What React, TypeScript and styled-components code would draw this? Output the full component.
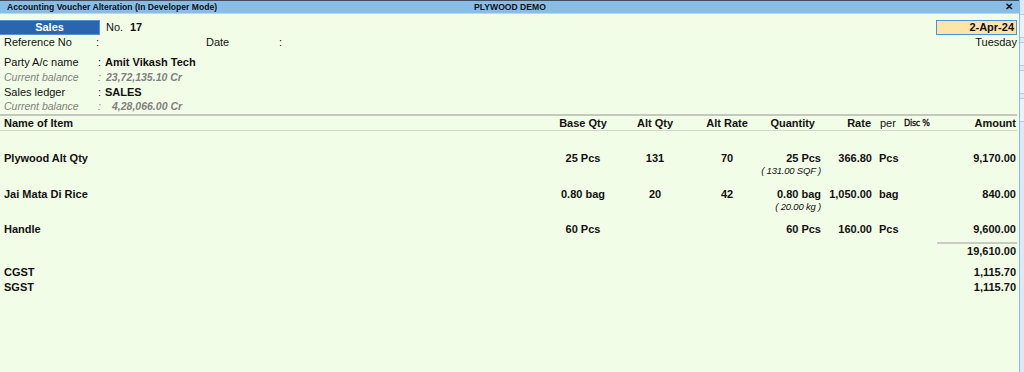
import styled, { createGlobalStyle } from "styled-components"

const GlobalStyle = createGlobalStyle`
  html, body {
    margin: 0;
    padding: 0;
    background: #f1fde6;
  }
  body {
    font-family: "Liberation Sans", Arial, sans-serif;
    font-size: 11px;
    color: #111;
  }
`

const Screen = styled.div`
  width: 1024px;
  height: 372px;
  display: flex;
  overflow: hidden;
`

const Window = styled.div`
  flex: 1;
  display: flex;
  flex-direction: column;
  background: #f1fde6;
`

const SideStrip = styled.div`
  width: 4px;
  border-left: 1px solid #8fb6dc;
  background: #dbeaf8;
  display: flex;
  flex-direction: column;
  gap: 4px;
  padding-top: 14px;
`

const StripKey = styled.div`
  height: 22px;
  border-top: 1px solid #b7cde3;
  border-bottom: 1px solid #b7cde3;
  background: #e9f2fb;
`

const TitleBar = styled.div`
  height: 12px;
  border-top: 1px solid #3d4f60;
  border-bottom: 1px solid #b9d7ee;
  background: #88bde6;
  display: grid;
  grid-template-columns: 1fr auto 1fr;
  align-items: center;
  padding: 0 6px 0 7px;
  font-size: 8.6px;
  font-weight: bold;
  color: #111;
`

const Close = styled.span`
  justify-self: end;
  font-size: 10px;
  line-height: 10px;
`

const Header = styled.div`
  padding: 5px 2px 0 0;
  display: flex;
  flex-direction: column;
`

const Line = styled.div<{ $h?: number }>`
  display: flex;
  align-items: center;
  height: ${p => p.$h ?? 15}px;
`

const VoucherType = styled.div`
  width: 99px;
  height: 13px;
  background: #2a65b0;
  border: 1px solid #5b8fcf;
  border-left: none;
  color: #fff;
  font-weight: bold;
  font-size: 11px;
  text-align: center;
  line-height: 13px;
`

const Label = styled.span<{ $w: number; $pl?: number }>`
  display: inline-block;
  width: ${p => p.$w}px;
  padding-left: ${p => p.$pl ?? 0}px;
  box-sizing: border-box;
`

const Bold = styled.span`
  font-weight: bold;
`

const Spacer = styled.div`
  flex: 1;
`

const DateBox = styled.div`
  width: 77px;
  height: 13px;
  background: #fde4a8;
  border: 1px solid #4f92d3;
  text-align: right;
  padding-right: 2px;
  font-weight: bold;
  line-height: 13px;
`

const Muted = styled.span<{ $w?: number; $pl?: number }>`
  display: inline-block;
  color: #808080;
  font-style: italic;
  font-size: 10.5px;
  ${p => (p.$w ? `width: ${p.$w}px;` : "")}
  padding-left: ${p => p.$pl ?? 0}px;
  box-sizing: border-box;
`

const MutedValue = styled(Muted)`
  font-weight: bold;
`

const Rule = styled.div<{ $strong?: boolean }>`
  height: ${p => (p.$strong ? 2 : 1)}px;
  background: ${p => (p.$strong ? "#c4c8c0" : "#d3d7cf")};
  margin-right: 2px;
`

const ItemGrid = styled.div`
  display: grid;
  grid-template-columns: 540px 86px 58px 86px 52px 50px 30px 1fr;
  padding-right: 3px;
  align-items: center;
`

const Cell = styled.div<{ $align?: "left" | "center" | "right"; $pl?: number; $pr?: number; $bold?: boolean }>`
  text-align: ${p => p.$align ?? "left"};
  padding-left: ${p => p.$pl ?? 0}px;
  padding-right: ${p => p.$pr ?? 0}px;
  font-weight: ${p => (p.$bold === false ? "normal" : "bold")};
  white-space: nowrap;
  line-height: 14px;
`

const HeadRow = styled(ItemGrid)`
  height: 14px;
`

const DiscAmount = styled.div`
  display: flex;
  justify-content: space-between;
  align-items: center;
`

const Body = styled.div`
  padding-top: 20px;
  display: flex;
  flex-direction: column;
`

const ItemBlock = styled.div<{ $hasSub: boolean }>`
  height: ${p => (p.$hasSub ? 35.5 : 20)}px;
`

const SubLine = styled.div`
  grid-column: 2 / 6;
  padding-right: 1px;
  font-style: italic;
  font-size: 9.5px;
  letter-spacing: -0.2px;
  line-height: 12px;
  text-align: right;
  white-space: nowrap;
`

const DiscHead = styled(Cell)`
  font-size: 9px;
  font-weight: normal;
  font-family: "DejaVu Sans Condensed", "Liberation Sans", sans-serif;
  letter-spacing: -0.3px;
  -webkit-text-stroke: 0.3px #111;
`

const TotalRule = styled.div`
  height: 2px;
  background: #c8ccc4;
  width: 80px;
  margin-left: auto;
  margin-right: 2px;
`

const SummaryRow = styled.div<{ $h: number }>`
  display: flex;
  justify-content: space-between;
  align-items: center;
  height: ${p => p.$h}px;
  padding: 0 3px 0 4px;
  font-weight: bold;
`

interface Item {
  name: string
  base: string
  alt: string
  altRate: string
  qty: string
  rate: string
  per: string
  amount: string
  sub?: string
}

const items: Item[] = [
  { name: "Plywood Alt Qty", base: "25 Pcs", alt: "131", altRate: "70", qty: "25 Pcs", rate: "366.80", per: "Pcs", amount: "9,170.00", sub: "( 131.00 SQF )" },
  { name: "Jai Mata Di Rice", base: "0.80 bag", alt: "20", altRate: "42", qty: "0.80 bag", rate: "1,050.00", per: "bag", amount: "840.00", sub: "( 20.00 kg )" },
  { name: "Handle", base: "60 Pcs", alt: "", altRate: "", qty: "60 Pcs", rate: "160.00", per: "Pcs", amount: "9,600.00" },
]

const App: React.FC = () => {
  return (
    <Screen>
      <GlobalStyle />
      <Window>
        <TitleBar>
          <span>Accounting Voucher Alteration (In Developer Mode)</span>
          <span>PLYWOOD DEMO</span>
          <Close>✕</Close>
        </TitleBar>
        <Header>
          <Line $h={16}>
            <VoucherType>Sales</VoucherType>
            <Label $w={30} $pl={6}>No.</Label>
            <Bold>17</Bold>
            <Spacer />
            <DateBox>2-Apr-24</DateBox>
          </Line>
          <Line $h={14}>
            <Label $w={96} $pl={4}>Reference No</Label>
            <Label $w={110}>:</Label>
            <Label $w={73}>Date</Label>
            <span>:</span>
            <Spacer />
            <span>Tuesday</span>
          </Line>
          <Line $h={5} />
          <Line $h={15}>
            <Label $w={98} $pl={4}>Party A/c name</Label>
            <Label $w={7}>:</Label>
            <Bold>Amit Vikash Tech</Bold>
          </Line>
          <Line $h={15}>
            <Muted $w={98} $pl={4}>Current balance</Muted>
            <Muted $w={8}>:</Muted>
            <MutedValue>23,72,135.10 Cr</MutedValue>
          </Line>
          <Line $h={15}>
            <Label $w={98} $pl={4}>Sales ledger</Label>
            <Label $w={7}>:</Label>
            <Bold>SALES</Bold>
          </Line>
          <Line $h={14}>
            <Muted $w={98} $pl={4}>Current balance</Muted>
            <Muted $w={14}>:</Muted>
            <MutedValue>4,28,066.00 Cr</MutedValue>
          </Line>
        </Header>
        <Line $h={1} />
        <Rule $strong />
        <HeadRow>
          <Cell $pl={4}>Name of Item</Cell>
          <Cell $align="center">Base Qty</Cell>
          <Cell $align="center">Alt Qty</Cell>
          <Cell $align="center">Alt Rate</Cell>
          <Cell $align="right" $pr={7}>Quantity</Cell>
          <Cell $align="right" $pr={1}>Rate</Cell>
          <Cell $pl={8} $bold={false}>per</Cell>
          <DiscAmount>
            <DiscHead $pl={2}>Disc %</DiscHead>
            <Cell $align="right">Amount</Cell>
          </DiscAmount>
        </HeadRow>
        <Rule />
        <Body>
          {items.map(item => (
            <ItemBlock key={item.name} $hasSub={!!item.sub}>
              <ItemGrid>
                <Cell $pl={4}>{item.name}</Cell>
                <Cell $align="center">{item.base}</Cell>
                <Cell $align="center">{item.alt}</Cell>
                <Cell $align="center">{item.altRate}</Cell>
                <Cell $align="right" $pr={1}>{item.qty}</Cell>
                <Cell $align="right">{item.rate}</Cell>
                <Cell $pl={7}>{item.per}</Cell>
                <Cell $align="right">{item.amount}</Cell>
              </ItemGrid>
              {item.sub && (
                <ItemGrid>
                  <SubLine>{item.sub}</SubLine>
                </ItemGrid>
              )}
            </ItemBlock>
          ))}
          <TotalRule />
          <SummaryRow $h={13}>
            <span />
            <span>19,610.00</span>
          </SummaryRow>
          <Line $h={7} />
          <SummaryRow $h={15}>
            <span>CGST</span>
            <span>1,115.70</span>
          </SummaryRow>
          <SummaryRow $h={15}>
            <span>SGST</span>
            <span>1,115.70</span>
          </SummaryRow>
        </Body>
      </Window>
      <SideStrip>
        <StripKey />
        <StripKey />
        <StripKey />
        <StripKey />
      </SideStrip>
    </Screen>
  )
}

export default App
